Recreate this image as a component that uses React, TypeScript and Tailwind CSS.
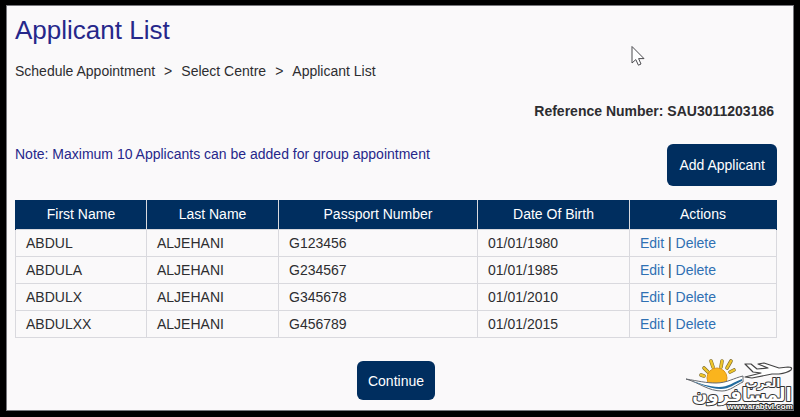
const applicants = [
  { first: 'ABDUL', last: 'ALJEHANI', passport: 'G123456', born: '01/01/1980' },
  { first: 'ABDULA', last: 'ALJEHANI', passport: 'G234567', born: '01/01/1985' },
  { first: 'ABDULX', last: 'ALJEHANI', passport: 'G345678', born: '01/01/2010' },
  { first: 'ABDULXX', last: 'ALJEHANI', passport: 'G456789', born: '01/01/2015' },
];

const columns = [
  { label: 'First Name', width: 'w-[131px]' },
  { label: 'Last Name', width: 'w-[132px]' },
  { label: 'Passport Number', width: 'w-[199px]' },
  { label: 'Date Of Birth', width: 'w-[152px]' },
  { label: 'Actions', width: 'w-auto' },
];

const cell = 'border border-[#d9d9de] px-[10px] py-[3px]';
const button = 'rounded-md bg-[#002e5f] text-white';

function Pointer() {
  return (
    <svg className="absolute left-[631px] top-[45px]" width="14" height="22" viewBox="0 0 14 22" aria-hidden="true">
      <path
        d="M1 1.5V18L4.8 14.6L7.4 20.2L10 19L7.6 13.6H13Z"
        fill="#fff"
        stroke="#4a4a4e"
        strokeWidth="1"
        strokeLinejoin="round"
      />
    </svg>
  );
}

function Watermark() {
  return (
    <svg className="absolute right-0 bottom-0" width="120" height="62" viewBox="0 0 120 62" aria-label="المسافرون العرب">
      <g strokeLinecap="round" fill="none">
        <path
          d="M21 20L24 21M24 13L28 17M31 6L33 12M42 6L41 12M51 6L47 13M50 17L54 15"
          stroke="#7c6a2c"
          strokeWidth="3.6"
        />
        <path
          d="M21 20L24 21M24 13L28 17M31 6L33 12M42 6L41 12M51 6L47 13M50 17L54 15"
          stroke="#eec52c"
          strokeWidth="2.4"
        />
      </g>
      <circle cx="37" cy="23" r="10" fill="#fab41d" stroke="#dd9518" />
      <path d="M6 24C18 26 26 28 36 28C47 28 54 23 63 21V27C56 30 50 36 42 36C28 36 20 28 6 24Z" fill="#fff" stroke="#65696e" strokeWidth="1" />
      <path d="M8 25C20 28 29 32 39 32C48 32 54 27 62 24V26C55 29 49 34 41 34C29 34 20 28 8 25Z" fill="#246c9e" />
      <path
        d="M65 9L71 9L77 14L88 13L78 9L84 8L99 13L108 12Q113 12 111 15Q107 18 99 19L92 19L72 23L65 22L81 18L73 17Z"
        fill="#fff"
        stroke="#444"
        strokeWidth="1.2"
        strokeLinejoin="round"
      />
      <g
        direction="rtl"
        fill="#fff"
        stroke="#333"
        strokeWidth="2"
        strokeLinejoin="round"
        paintOrder="stroke"
        textAnchor="middle"
        className="[font-family:'DejaVu_Sans',sans-serif] font-bold"
      >
        <text x="62" y="46" fontSize="18">المسافرون</text>
        <text x="83" y="32" fontSize="12">العرب</text>
      </g>
      <text
        x="80"
        y="54"
        fontSize="8"
        fill="#fff"
        stroke="#333"
        strokeWidth="2"
        paintOrder="stroke"
        textAnchor="middle"
        className="[font-family:'Liberation_Sans',Arial,sans-serif] font-bold"
      >
        www.arabtvl.com
      </text>
    </svg>
  );
}

export default function App() {
  return (
    <div className="relative min-h-screen bg-black pt-[5px] pr-[6px] pb-[6px] pl-[6px] text-[14px] leading-5 text-[#2d2d30] [font-family:'Liberation_Sans',Arial,sans-serif]">
      <main className="min-h-[calc(100vh-11px)] border border-[#77777c] bg-[#faf9fa] pr-[16px] pl-[8px]">
        <h1 className="pt-2 text-[26px] leading-8 text-[#26278a]">Applicant List</h1>
        <nav aria-label="Breadcrumb" className="mt-[15px]">
          <ol className="flex gap-[9px]">
            <li>Schedule Appointment</li>
            <li aria-hidden="true">&gt;</li>
            <li>Select Centre</li>
            <li aria-hidden="true">&gt;</li>
            <li aria-current="page">Applicant List</li>
          </ol>
        </nav>
        <p className="mt-5 pr-[3px] text-right font-bold">Reference Number: SAU3011203186</p>
        <div className="mt-[23px] flex items-start justify-between">
          <p className="text-[#26278a]">Note: Maximum 10 Applicants can be added for group appointment</p>
          <button type="button" className={`${button} h-[42px] px-3`}>Add Applicant</button>
        </div>
        <table className="mt-[14px] w-full table-fixed border-collapse">
          <thead>
            <tr className="bg-[#002e5f] text-white">
              {columns.map((column) => (
                <th
                  key={column.label}
                  scope="col"
                  className={`${column.width} border-x border-x-[#d9d9de] pt-1 pb-[5px] font-normal first:border-l-[#002e5f] last:border-r-[#002e5f]`}
                >
                  {column.label}
                </th>
              ))}
            </tr>
          </thead>
          <tbody>
            {applicants.map((person) => (
              <tr key={person.passport}>
                <td className={cell}>{person.first}</td>
                <td className={cell}>{person.last}</td>
                <td className={cell}>{person.passport}</td>
                <td className={cell}>{person.born}</td>
                <td className={cell}>
                  <a href="#edit" className="text-[#2f70b3]">Edit</a> |{' '}
                  <a href="#delete" className="text-[#2f70b3]">Delete</a>
                </td>
              </tr>
            ))}
          </tbody>
        </table>
        <div className="mt-[23px] flex justify-center">
          <button type="button" className={`${button} h-[39px] px-[11px]`}>Continue</button>
        </div>
      </main>
      <Pointer />
      <Watermark />
    </div>
  );
}
